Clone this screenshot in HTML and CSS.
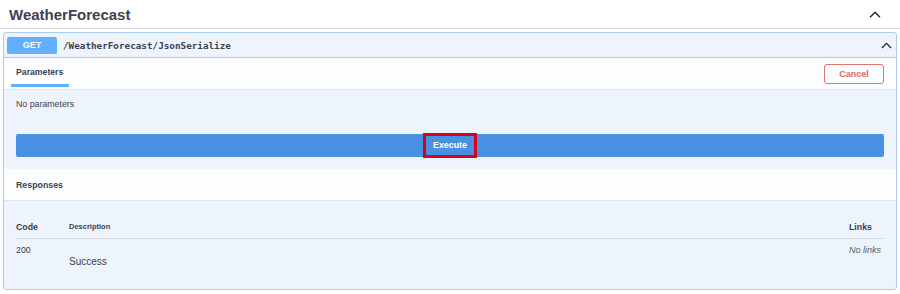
FILE: index.html
```html
<!DOCTYPE html>
<html lang="en">
<head>
    <meta charset="UTF-8">
    <meta name="viewport" content="width=device-width, initial-scale=1.0">
    <title>Swagger UI - WeatherForecast</title>
    <link rel="stylesheet" href="styles.css">
</head>
<body>
    <div class="tag">
        <h3>WeatherForecast</h3>
        <svg class="caret" width="12" height="7" viewBox="0 0 12 7"><polyline points="1,6.2 6,1.2 11,6.2" /></svg>
    </div>

    <div class="opblock">
        <div class="summary">
            <span class="method">GET</span>
            <span class="path">/WeatherForecast/JsonSerialize</span>
            <svg class="caret small" width="12" height="7" viewBox="0 0 12 7"><polyline points="1,6.2 6,1.2 11,6.2" /></svg>
        </div>

        <div class="section-header">
            <div class="tab">Parameters</div>
            <button class="btn-cancel">Cancel</button>
        </div>
        <div class="params">
            <p class="no-params">No parameters</p>
            <button class="btn-execute"><span>Execute</span></button>
        </div>

        <div class="section-header responses-header">
            <h4>Responses</h4>
        </div>
        <div class="responses">
            <table>
                <thead>
                    <tr>
                        <th class="col-code">Code</th>
                        <th class="col-desc">Description</th>
                        <th class="col-links">Links</th>
                    </tr>
                </thead>
                <tbody>
                    <tr>
                        <td class="col-code">200</td>
                        <td class="col-desc"><div class="desc">Success</div></td>
                        <td class="col-links"><i>No links</i></td>
                    </tr>
                </tbody>
            </table>
        </div>
    </div>
</body>
</html>
```

FILE: styles.css
```css
body { margin: 0; background: #fff; font-family: "Liberation Sans", Arial, sans-serif; color: #3b4151; }
.tag { display: flex; justify-content: space-between; align-items: center; height: 28px; padding: 0 19px 0 9px; border-bottom: 1px solid #d9dbdf; }
.tag h3 { margin: 0; font-size: 15px; font-weight: bold; }
.caret polyline { fill: none; stroke: #222; stroke-width: 1.3; }

.opblock { margin: 3px 3px 0; border: 1px solid #a9cdf1; border-radius: 3px; background: #edf4fb; overflow: hidden; }
.summary { display: flex; align-items: center; height: 24px; padding: 0 4px 0 3px; border-bottom: 1px solid #a9cdf1; }
.method { width: 50px; height: 17px; line-height: 17px; text-align: center; background: #61affe; color: #fff; font-size: 9px; font-weight: bold; border-radius: 2px; }
.path { margin-left: 6px; flex: 1; font-family: "DejaVu Sans Mono", monospace; font-size: 9.3px; font-weight: 600; }
.caret.small { width: 11px; }

.section-header { display: flex; justify-content: space-between; align-items: center; height: 31px; padding: 0 12px 0 7px; background: #fcfdff; border-bottom: 1px solid #dde6ef; }
.tab { align-self: stretch; display: flex; align-items: center; padding: 0 5px; font-size: 8.7px; font-weight: bold; border-bottom: 3px solid #61affe; margin-bottom: 2px; box-sizing: border-box; width: 58px; padding-top: 2px; }
.btn-cancel { width: 60px; height: 20px; padding: 0; background: transparent; border: 1.5px solid #e57373; border-radius: 3px; color: #e06666; font-family: inherit; font-size: 9px; font-weight: bold; }

.params { padding: 0 12px 12px; }
.no-params { margin: 0; padding-top: 9px; font-size: 8.8px; height: 35px; }
.btn-execute { display: flex; justify-content: center; align-items: center; width: 100%; height: 23px; padding: 0; border: none; border-radius: 2px; background: #4990e2; overflow: visible; }
.btn-execute span { display: block; height: 25px; line-height: 19px; padding: 0 6.5px; border: 3px solid #d9001b; box-sizing: border-box; color: #fff; font-family: "Liberation Sans", Arial, sans-serif; font-size: 8.9px; font-weight: bold; }

.responses-header { padding-left: 12px; }
.responses-header h4 { margin: 0; font-size: 8.8px; font-weight: bold; }
.responses { padding: 14px 12px 0; height: 74px; }
table { width: 100%; border-collapse: collapse; }
th { text-align: left; font-size: 8.8px; font-weight: bold; height: 23px; padding: 0; border-bottom: 1px solid #d6dee7; }
th.col-desc { font-size: 7.5px; }
td { vertical-align: top; padding: 6px 0 0; font-size: 8.8px; }
.col-code { width: 53px; }
.col-links { width: 35px; }
.desc { margin-top: 11px; font-size: 10px; }
td.col-links i { color: #555b66; font-size: 9px; }
```
